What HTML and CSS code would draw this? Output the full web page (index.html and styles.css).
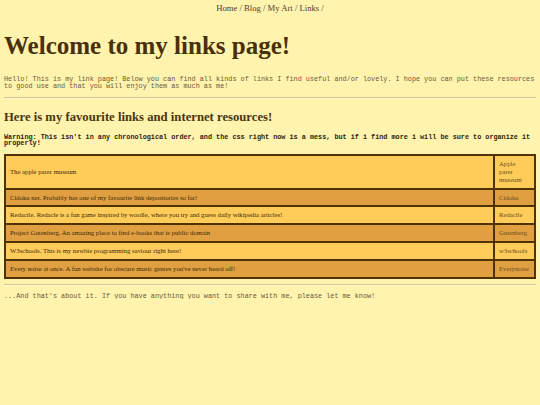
FILE: index.html
```html
<!DOCTYPE html>
<html>
<head>
<meta charset="utf-8">
<link rel="stylesheet" href="styles.css">
</head>
<body>
<nav class="nav"><a href="#">Home</a> / <a href="#">Blog</a> / <a href="#">My Art</a> / <a href="#">Links</a> /</nav>
<h1 class="title">Welcome to my links page!</h1>
<p class="intro">Hello! This is my link page! Below you can find all kinds of links I find useful and/or lovely. I hope you can put these resources to good use and that you will enjoy them as much as me!</p>
<hr class="rule">
<h2 class="subtitle">Here is my favourite links and internet resources!</h2>
<p class="warning">Warning: This isn't in any chronological order, and the css right now is a mess, but if i find more i will be sure to organize it properly!</p>
<table class="links">
<tr class="light"><td class="desc">The apple parer museum</td><td class="name">Apple parer museum</td></tr>
<tr class="dark"><td class="desc">Cidoku net. Probably has one of my favourite link depositories so far!</td><td class="name">Cidoku</td></tr>
<tr class="light"><td class="desc">Redactle. Redacle is a fun game inspired by wordle, where you try and guess daily wikipedia articles!</td><td class="name">Redactle</td></tr>
<tr class="dark"><td class="desc">Project Gutenberg. An amazing place to find e-books that is public domain</td><td class="name">Gutenberg</td></tr>
<tr class="light"><td class="desc">W3schools. This is my newbie programming saviour right here!</td><td class="name">w3schools</td></tr>
<tr class="dark"><td class="desc">Every noise at once. A fun website for obscure music genres you've never heard off!</td><td class="name">Everynoise</td></tr>
</table>
<hr class="rule rule-bottom">
<p class="outro">...And that's about it. If you have anything you want to share with me, please let me know!</p>
</body>
</html>
```

FILE: styles.css
```css
html, body {
  background: #fff3ad;
}
body {
  margin: 0 4px;
  font-family: "Liberation Serif", serif;
  color: #4a300a;
}
.nav {
  margin-top: 3px;
  text-align: center;
  font-size: 8.64px;
  line-height: 10px;
  color: #4d4030;
}
.nav a {
  color: #4d4030;
  text-decoration: none;
}
.title {
  margin: 18px 0 0;
  font-size: 25px;
  line-height: 29px;
  font-weight: bold;
  color: #4a300a;
}
.intro {
  margin: 16px 0 0;
  font-family: "Liberation Mono", monospace;
  font-size: 6.8px;
  line-height: 6.8px;
  color: #6b5a3a;
}
.rule {
  margin: 7px 0 0;
  border: 0;
  border-top: 1px solid #d4c68c;
  border-bottom: 1px solid #fff8d4;
  height: 0;
}
.subtitle {
  margin: 11px 0 0;
  font-size: 12.7px;
  line-height: 15px;
  font-weight: bold;
  color: #4b3510;
}
.warning {
  margin: 9px 0 0;
  font-family: "Liberation Mono", monospace;
  font-weight: bold;
  font-size: 6.8px;
  line-height: 6.8px;
  color: #2e2410;
}
.links {
  margin-top: 7px;
  width: 100%;
  border-collapse: separate;
  border-spacing: 0;
  border: 1px solid #4f3208;
  font-size: 6.7px;
  line-height: 7.8px;
}
.links td {
  border: 1px solid #4f3208;
  padding: 4px 4px;
  vertical-align: middle;
}
.links .desc {
  color: #3d2a08;
}
.links .name {
  width: 31px;
  color: #6b4c1e;
}
.light td {
  background: #ffcc5a;
}
.dark td {
  background: #e0a042;
}
.rule-bottom {
  margin-top: 5px;
}
.outro {
  margin: 7px 0 0;
  font-family: "Liberation Mono", monospace;
  font-size: 6.8px;
  line-height: 6.8px;
  color: #6b5a3a;
}
```
